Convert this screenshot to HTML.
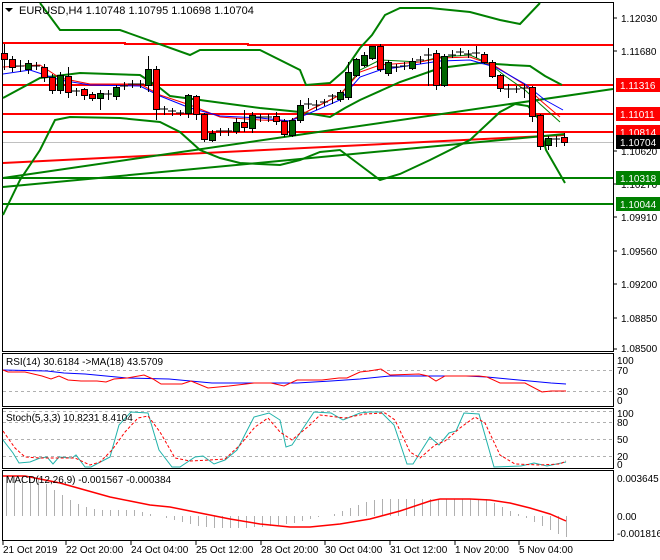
<!DOCTYPE html>
<html><head><meta charset="utf-8"><style>
html,body{margin:0;padding:0;background:#fff;}
svg{display:block;font-family:"Liberation Sans",sans-serif;}
</style></head><body>
<svg width="660" height="560" viewBox="0 0 660 560" xmlns="http://www.w3.org/2000/svg">
<rect width="660" height="560" fill="#fff"/>
<g fill="none" stroke="#000" stroke-width="1">
<path d="M2.5 2.5H613.5V351.5H2.5Z"/>
<path d="M2.5 353.5H613.5V406.5H2.5Z"/>
<path d="M2.5 408.5H613.5V468.5H2.5Z"/>
<path d="M2.5 470.5H613.5V540.5H2.5Z"/>
</g>
<line x1="3" y1="142.5" x2="613" y2="142.5" stroke="#c0c0c0"/>
<g stroke="#f00" stroke-width="2">
<polyline fill="none" points="3,43 125,43 125,44 248,44 248,45 613,45"/>
<line x1="3" y1="85" x2="613" y2="85"/>
<line x1="3" y1="114" x2="613" y2="114"/>
<line x1="3" y1="132" x2="613" y2="132"/>
<line x1="3" y1="163" x2="565" y2="135"/>
</g>
<g stroke="#008000" stroke-width="2" fill="none">
<line x1="3" y1="178" x2="613" y2="178"/>
<line x1="3" y1="204" x2="613" y2="204"/>
<line x1="3" y1="178" x2="613" y2="89"/>
<line x1="3" y1="187" x2="565" y2="134"/>
<polyline points="40,3 60,30 120,30 190,55 200,50 260,50 300,70 306,85 330,83 345,70 360,48 372,35 385,15 400,8 430,8 470,12 500,20 520,24 540,3"/>
<polyline points="3,98 40,78 80,73 140,75 160,88 170,96 200,100 260,108 300,112 330,117 345,108 360,100 400,82 440,68 480,63 510,65 530,66 545,76 562,85"/>
<polyline points="3,215 20,180 40,150 55,120 70,117 120,118 160,122 180,132 200,150 220,158 240,163 280,165 300,160 320,152 340,150 360,165 380,180 400,174 430,160 470,140 500,112 515,104 528,106 538,118 546,150 565,183"/>
<polyline points="290,121 310,110 340,95 360,70 380,60 420,62 440,57 470,55 490,64 505,76 525,90 540,104 560,122" stroke-width="1"/>
</g>
<polyline fill="none" stroke="#f00" stroke-width="1" points="3,67 40,65 60,78 90,84 140,84 160,95 190,105 220,117 260,120 290,121 310,110 340,95 360,72 380,65 420,62 440,58 470,57 495,66 525,85 540,100 560,117"/>
<polyline fill="none" stroke="#00f" stroke-width="1" points="3,74 30,70 60,80 90,85 140,86 160,96 190,108 220,116 260,118 290,121 310,113 340,100 360,77 380,70 420,64 440,61 470,60 495,67 525,84 545,100 563,110"/>
<g stroke="#000" stroke-width="1">
<path d="M4.5 44V70M12.5 56V72M20.5 60V72M28.5 60V74M36.5 62V70M44.5 64V82M52.5 74V94M60.5 72V94M68.5 67V98M76.5 88V96M84.5 88V100M92.5 92V101M100.5 90V110M108.5 90V100M116.5 85V100M124.5 82V90M132.5 80V88M140.5 80V88M148.5 56V92M156.5 66V120M164.5 106V115M172.5 108V116M180.5 110V116M188.5 94V118M196.5 95V120M204.5 113V142M212.5 130V142M220.5 128V136M228.5 128V136M236.5 118V134M244.5 110V132M252.5 112V133M260.5 114V122M268.5 114V122M276.5 112V125M284.5 119V137M292.5 118V137M300.5 100V123M308.5 98V109M316.5 100V110M324.5 99V106M332.5 94V104M340.5 90V102M348.5 62V100M356.5 58V77M364.5 52V67M372.5 46V60M380.5 44V72M388.5 60V76M396.5 64V72M404.5 62V70M412.5 58V70M420.5 56V64M428.5 48V86M436.5 50V90M444.5 54V87M452.5 50V58M460.5 48V56M468.5 50V58M476.5 46V58M484.5 52V64M492.5 60V78M500.5 74V92M508.5 84V98M516.5 86V93M524.5 84V98M532.5 86V122M540.5 114V150M548.5 136V150M556.5 136V147M564.5 133V146"/>
</g>
<g stroke="#000" stroke-width="1">
<g fill="#f00">
<rect x="1.5" y="53.5" width="6" height="6"/><rect x="9.5" y="59.5" width="6" height="8"/><rect x="41.5" y="67.5" width="6" height="10"/><rect x="49.5" y="77.5" width="6" height="13"/><rect x="65.5" y="76.5" width="6" height="16"/><rect x="81.5" y="89.5" width="6" height="6"/><rect x="89.5" y="94.5" width="6" height="4"/><rect x="153.5" y="69.5" width="6" height="40"/><rect x="193.5" y="96.5" width="6" height="18"/><rect x="201.5" y="114.5" width="6" height="25"/><rect x="241.5" y="122.5" width="6" height="5"/><rect x="273.5" y="116.5" width="6" height="5"/><rect x="281.5" y="121.5" width="6" height="13"/><rect x="377.5" y="46.5" width="6" height="23"/><rect x="433.5" y="53.5" width="6" height="32"/><rect x="481.5" y="54.5" width="6" height="8"/><rect x="489.5" y="62.5" width="6" height="14"/><rect x="497.5" y="75.5" width="6" height="13"/><rect x="529.5" y="87.5" width="6" height="29"/><rect x="537.5" y="115.5" width="6" height="31"/><rect x="561.5" y="137.5" width="6" height="5"/>
</g>
<g fill="#006400">
<rect x="25.5" y="63.5" width="6" height="6"/><rect x="57.5" y="75.5" width="6" height="15"/><rect x="97.5" y="93.5" width="6" height="5"/><rect x="113.5" y="87.5" width="6" height="9"/><rect x="145.5" y="69.5" width="6" height="16"/><rect x="185.5" y="95.5" width="6" height="18"/><rect x="209.5" y="133.5" width="6" height="7"/><rect x="233.5" y="122.5" width="6" height="9"/><rect x="249.5" y="115.5" width="6" height="13"/><rect x="289.5" y="120.5" width="6" height="15"/><rect x="297.5" y="105.5" width="6" height="15"/><rect x="337.5" y="92.5" width="6" height="7"/><rect x="345.5" y="72.5" width="6" height="25"/><rect x="353.5" y="59.5" width="6" height="16"/><rect x="361.5" y="55.5" width="6" height="10"/><rect x="369.5" y="46.5" width="6" height="12"/><rect x="385.5" y="62.5" width="6" height="11"/><rect x="409.5" y="61.5" width="6" height="7"/><rect x="441.5" y="56.5" width="6" height="29"/><rect x="545.5" y="138.5" width="6" height="7"/>
</g>
<path d="M16 66H24M32 66H40M72 91H80M104 94H112M120 86H128M128 84H136M136 84H144M160 109H168M168 111H176M176 113H184M216 131H224M224 131H232M256 117H264M264 117H272M304 104H312M312 105H320M320 102H328M328 96H336M392 67H400M400 66H408M416 60H424M424 55H432M448 55H456M456 52H464M464 54H472M472 53H480M504 89H512M512 89H520M520 88H528M552 139H560"/>
</g>
<path d="M5 8H13L9 12Z" fill="#000"/>
<text x="19" y="14" font-size="11" fill="#000">EURUSD,H4  1.10748 1.10795 1.10698 1.10704</text>
<g font-size="10" fill="#000">
<g stroke="#000"><path d="M613 18H617M613 51H617M613 151H617M613 184H617M613 217H617M613 251H617M613 284H617M613 318H617M613 349H617"/></g>
<text x="621" y="22">1.12030</text><text x="621" y="55">1.11680</text><text x="621" y="155">1.10620</text><text x="621" y="188">1.10270</text><text x="621" y="221">1.09910</text><text x="621" y="255">1.09560</text><text x="621" y="288">1.09200</text><text x="621" y="322">1.08850</text><text x="621" y="352">1.08500</text>
</g>
<rect x="616" y="78" width="44" height="14" fill="#f00"/><text x="620" y="89" font-size="10" fill="#fff">1.11316</text>
<rect x="616" y="107" width="44" height="14" fill="#f00"/><text x="620" y="118" font-size="10" fill="#fff">1.11011</text>
<rect x="616" y="125" width="44" height="14" fill="#f00"/><text x="620" y="136" font-size="10" fill="#fff">1.10814</text>
<rect x="616" y="135" width="44" height="14" fill="#000"/><text x="620" y="146" font-size="10" fill="#fff">1.10704</text>
<rect x="616" y="171" width="44" height="14" fill="#008000"/><text x="620" y="182" font-size="10" fill="#fff">1.10318</text>
<rect x="616" y="197" width="44" height="14" fill="#008000"/><text x="620" y="208" font-size="10" fill="#fff">1.10044</text>
<!-- RSI -->
<g stroke="#b0b0b0" stroke-dasharray="3,3"><line x1="3" y1="370.5" x2="613" y2="370.5"/><line x1="3" y1="391.5" x2="613" y2="391.5"/>
<line x1="3" y1="411.5" x2="613" y2="411.5"/><line x1="3" y1="422.5" x2="613" y2="422.5"/><line x1="3" y1="439.5" x2="613" y2="439.5"/><line x1="3" y1="456.5" x2="613" y2="456.5"/></g>
<polyline fill="none" stroke="#00f" points="3,370 47,371 64,373 85,374 127,378 169,379 212,383 297,383 331,381 360,379 390,376 466,376 487,377 508,379 551,383 566,384"/>
<polyline fill="none" stroke="#f00" points="3,370 8,372 25,372 42,376 51,379 59,376 68,380 81,381 97,381 106,382 114,379 127,378 144,375 153,379 161,384 182,384 191,381 208,388 229,386 246,384 254,383 271,383 284,386 297,380 322,380 339,378 347,378 360,372 369,371 381,369 390,375 419,374 428,376 436,381 445,376 479,376 487,377 500,383 525,383 542,392 551,391 566,391"/>
<text x="6" y="365" font-size="10" fill="#000">RSI(14) 30.6184  -&gt;MA(18) 43.5709</text>
<g font-size="10" fill="#000"><text x="617" y="364">100</text><text x="617" y="374">70</text><text x="617" y="395">30</text><text x="617" y="404">0</text></g>
<!-- Stoch -->
<polyline fill="none" stroke="#20b2aa" points="3,440 13,453 19,463 30,462 40,458 47,457 53,464 59,457 72,458 76,455 85,467 91,467 110,457 119,425 131,412 148,413 159,450 172,467 180,467 195,457 203,456 214,464 225,460 237,450 254,417 269,413 280,420 286,447 292,445 314,412 331,413 343,420 360,413 369,412 381,412 394,425 407,464 413,464 430,437 439,445 449,433 456,431 464,413 479,414 494,467 521,466 534,463 547,466 566,462"/>
<polyline fill="none" stroke="#f00" stroke-dasharray="3,2" points="3,431 15,448 25,457 40,458 60,458 75,458 90,465 100,462 112,450 125,432 138,418 148,416 160,432 175,458 190,461 210,460 225,459 240,445 255,427 268,418 280,432 292,440 310,425 320,415 345,418 365,414 385,413 395,420 410,452 420,458 435,445 445,441 460,428 475,417 485,423 500,455 515,464 540,465 560,464 566,461"/>
<text x="6" y="421" font-size="10" fill="#000">Stoch(5,3,3) 10.8231 8.4104</text>
<g font-size="10" fill="#000"><text x="617" y="417">100</text><text x="617" y="426">80</text><text x="617" y="443">50</text><text x="617" y="460">20</text><text x="617" y="468">0</text></g>
<!-- MACD -->
<g stroke="#b0b0b0"><path d="M6.5 476V516M14.5 476V516M22.5 476V516M30.5 476V516M38.5 478V516M46.5 484V516M54.5 490V516M62.5 495V516M70.5 500V516M78.5 504V516M86.5 507V516M94.5 509V516M102.5 510V516M110.5 510V516M118.5 510V516M126.5 510V516M134.5 510V516M142.5 512V516M150.5 514V516M166.5 516V518M174.5 516V520M182.5 516V522M190.5 516V524M198.5 516V526M206.5 516V527M214.5 516V528M222.5 516V528M230.5 516V528M238.5 516V528M246.5 516V528M254.5 516V527M262.5 516V527M270.5 516V526M278.5 516V525M286.5 516V524M294.5 516V523M302.5 516V521M310.5 516V519M318.5 516V517M334.5 514V516M342.5 511V516M350.5 508V516M358.5 505V516M366.5 502V516M374.5 500V516M382.5 499V516M390.5 499V516M398.5 499V516M406.5 499V516M414.5 499V516M422.5 499V516M430.5 499V516M438.5 499V516M446.5 499V516M454.5 499V516M462.5 499V516M470.5 499V516M478.5 499V516M486.5 499V516M494.5 503V516M502.5 507V516M510.5 511V516M518.5 514V516M526.5 516V518M534.5 516V522M542.5 516V526M550.5 516V530M558.5 516V534M566.5 516V537"/></g>
<polyline fill="none" stroke="#f00" stroke-width="1.5" points="3,476 25,476 60,483 85,490 110,497 130,501 150,505 170,507 195,512 230,519 260,524 290,527 310,527 340,524 370,519 400,511 430,501 440,499 470,499 490,500 510,503 530,508 550,514 566,521"/>
<text x="6" y="483" font-size="10" fill="#000">MACD(12,26,9) -0.001567 -0.000384</text>
<g font-size="10" fill="#000"><text x="617" y="482">0.003645</text><text x="617" y="520">0.00</text><text x="617" y="537">-0.001816</text></g>
<!-- time axis -->
<g stroke="#000"><path d="M3 541V545M66 541V545M131 541V545M196 541V545M261 541V545M325 541V545M390 541V545M455 541V545M519 541V545"/></g>
<g font-size="10" fill="#000">
<text x="3" y="553">21 Oct 2019</text><text x="66" y="553">22 Oct 20:00</text><text x="131" y="553">24 Oct 04:00</text><text x="196" y="553">25 Oct 12:00</text><text x="261" y="553">28 Oct 20:00</text><text x="325" y="553">30 Oct 04:00</text><text x="390" y="553">31 Oct 12:00</text><text x="455" y="553">1 Nov 20:00</text><text x="519" y="553">5 Nov 04:00</text>
</g>
</svg>
</body></html>
